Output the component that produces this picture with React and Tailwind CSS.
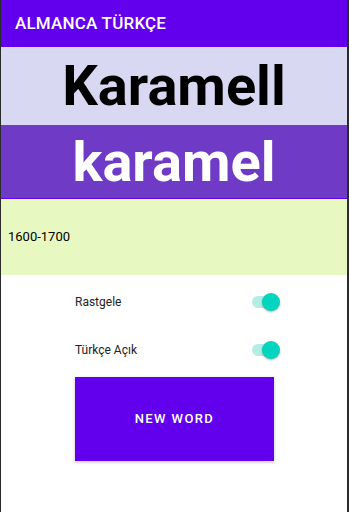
import React from "react";

function Toggle() {
  return (
    <div className="relative w-[28px] h-[20px] flex items-center">
      <div className="w-[26px] h-[12px] rounded-full bg-[#b3ede5]" />
      <div className="absolute right-0 top-[1px] w-[18px] h-[18px] rounded-full bg-[#03d5bf] shadow-[0_1px_2px_rgba(0,0,0,0.3)]" />
    </div>
  );
}

export default function App() {
  return (
    <div
      className="w-[349px] h-[512px] bg-white flex flex-col border-l border-r-2 border-[#2b2b2b] overflow-hidden"
      style={{ fontFamily: "Roboto, 'Noto Sans', sans-serif" }}
    >
      <div className="h-[47px] bg-[#6200ee] flex items-center pl-[14px] shrink-0">
        <span className="text-white text-[17px] font-medium tracking-[0.2px]">ALMANCA TÜRKÇE</span>
      </div>
      <div className="h-[78px] bg-[#d9d8f2] flex items-center justify-center shrink-0">
        <span className="text-black text-[56px] font-bold leading-none">Karamell</span>
      </div>
      <div className="h-[74px] bg-[#6f3ac6] border-b border-[#6200ee] flex items-center justify-center shrink-0">
        <span className="text-white text-[56px] font-bold leading-none">karamel</span>
      </div>
      <div className="h-[76px] bg-[#e7f9c0] flex items-center pl-[7px] shrink-0">
        <span className="text-black text-[13px]">1600-1700</span>
      </div>
      <div className="flex flex-col pl-[74px] w-[279px]">
        <div className="h-[50px] flex items-center justify-between mt-[2px]">
          <span className="text-[12px] text-[#222]">Rastgele</span>
          <Toggle />
        </div>
        <div className="h-[46px] flex items-center justify-between">
          <span className="text-[12px] text-[#222]">Türkçe Açık</span>
          <Toggle />
        </div>
        <button className="mt-[4px] w-[199px] h-[84px] bg-[#6200ee] text-white text-[13px] font-medium tracking-[1.4px] shadow-[0_1px_3px_rgba(0,0,0,0.25)]">
          NEW WORD
        </button>
      </div>
    </div>
  );
}
